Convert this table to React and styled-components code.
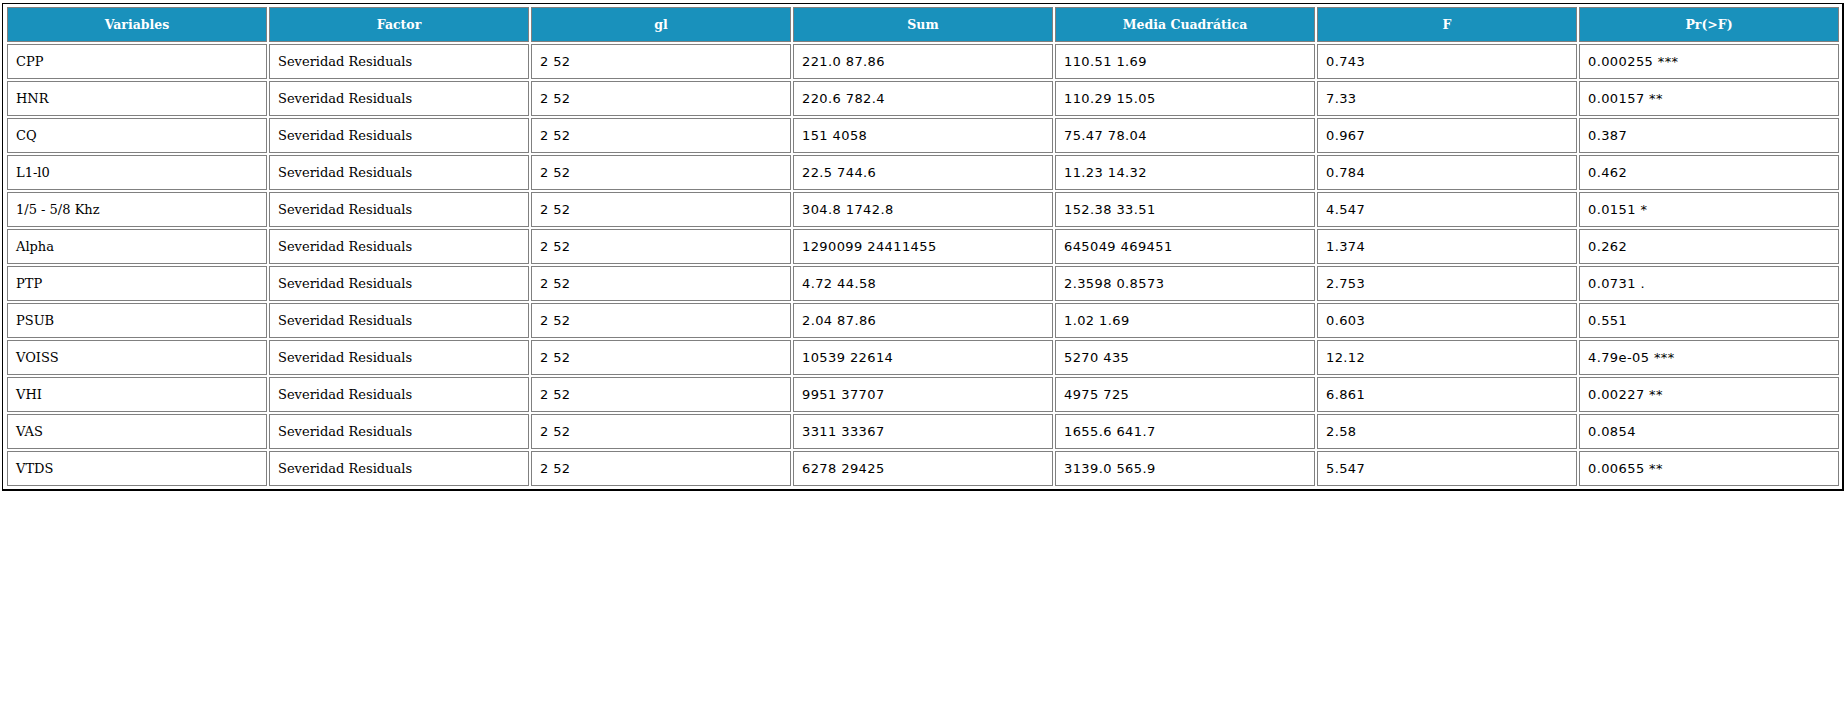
import React from "react";
import styled, { createGlobalStyle } from "styled-components";

const Global = createGlobalStyle`
  html, body { margin: 0; padding: 0; background: #ffffff; }
  body { font-family: "DejaVu Serif", serif; }
`;

const Page = styled.div`
  padding: 3px 0 0 2px;
`;

const Table = styled.table`
  width: 1842px;
  table-layout: fixed;
  border-collapse: separate;
  border-spacing: 2px;
  border-style: solid;
  border-color: #000;
  border-width: 1px 2px 2px 1px;
  padding: 1px 1px 1px 2px;
  box-sizing: border-box;
`;

const HeadCell = styled.th`
  height: 33px;
  padding: 0 8px;
  background: #1991bc;
  border: 1px solid #808080;
  color: #ffffff;
  font-family: "DejaVu Serif", serif;
  font-weight: bold;
  font-size: 12.5px;
  text-align: center;
  vertical-align: middle;
`;

const Cell = styled.td`
  height: 33px;
  padding: 0 8px;
  border: 1px solid #808080;
  color: #000;
  font-family: ${(p) =>
    p.$numeric ? '"DejaVu Sans", sans-serif' : '"DejaVu Serif", serif'};
  font-size: 13px;
  letter-spacing: ${(p) => (p.$numeric ? "0.4px" : "0")};
  text-align: left;
  vertical-align: middle;
  white-space: nowrap;
`;

const headers = ["Variables", "Factor", "gl", "Sum", "Media Cuadrática", "F", "Pr(>F)"];

const rows = [
  ["CPP", "221.0 87.86", "110.51 1.69", "0.743", "0.000255 ***"],
  ["HNR", "220.6 782.4", "110.29 15.05", "7.33", "0.00157 **"],
  ["CQ", "151 4058", "75.47 78.04", "0.967", "0.387"],
  ["L1-l0", "22.5 744.6", "11.23 14.32", "0.784", "0.462"],
  ["1/5 - 5/8 Khz", "304.8 1742.8", "152.38 33.51", "4.547", "0.0151 *"],
  ["Alpha", "1290099 24411455", "645049 469451", "1.374", "0.262"],
  ["PTP", "4.72 44.58", "2.3598 0.8573", "2.753", "0.0731 ."],
  ["PSUB", "2.04 87.86", "1.02 1.69", "0.603", "0.551"],
  ["VOISS", "10539 22614", "5270 435", "12.12", "4.79e-05 ***"],
  ["VHI", "9951 37707", "4975 725", "6.861", "0.00227 **"],
  ["VAS", "3311 33367", "1655.6 641.7", "2.58", "0.0854"],
  ["VTDS", "6278 29425", "3139.0 565.9", "5.547", "0.00655 **"],
];

export default function App() {
  return (
    <Page>
      <Global />
      <Table>
        <thead>
          <tr>
            {headers.map((h) => (
              <HeadCell key={h}>{h}</HeadCell>
            ))}
          </tr>
        </thead>
        <tbody>
          {rows.map(([name, sum, mean, f, p]) => (
            <tr key={name}>
              <Cell>{name}</Cell>
              <Cell>Severidad Residuals</Cell>
              <Cell $numeric>2 52</Cell>
              <Cell $numeric>{sum}</Cell>
              <Cell $numeric>{mean}</Cell>
              <Cell $numeric>{f}</Cell>
              <Cell $numeric>{p}</Cell>
            </tr>
          ))}
        </tbody>
      </Table>
    </Page>
  );
}
